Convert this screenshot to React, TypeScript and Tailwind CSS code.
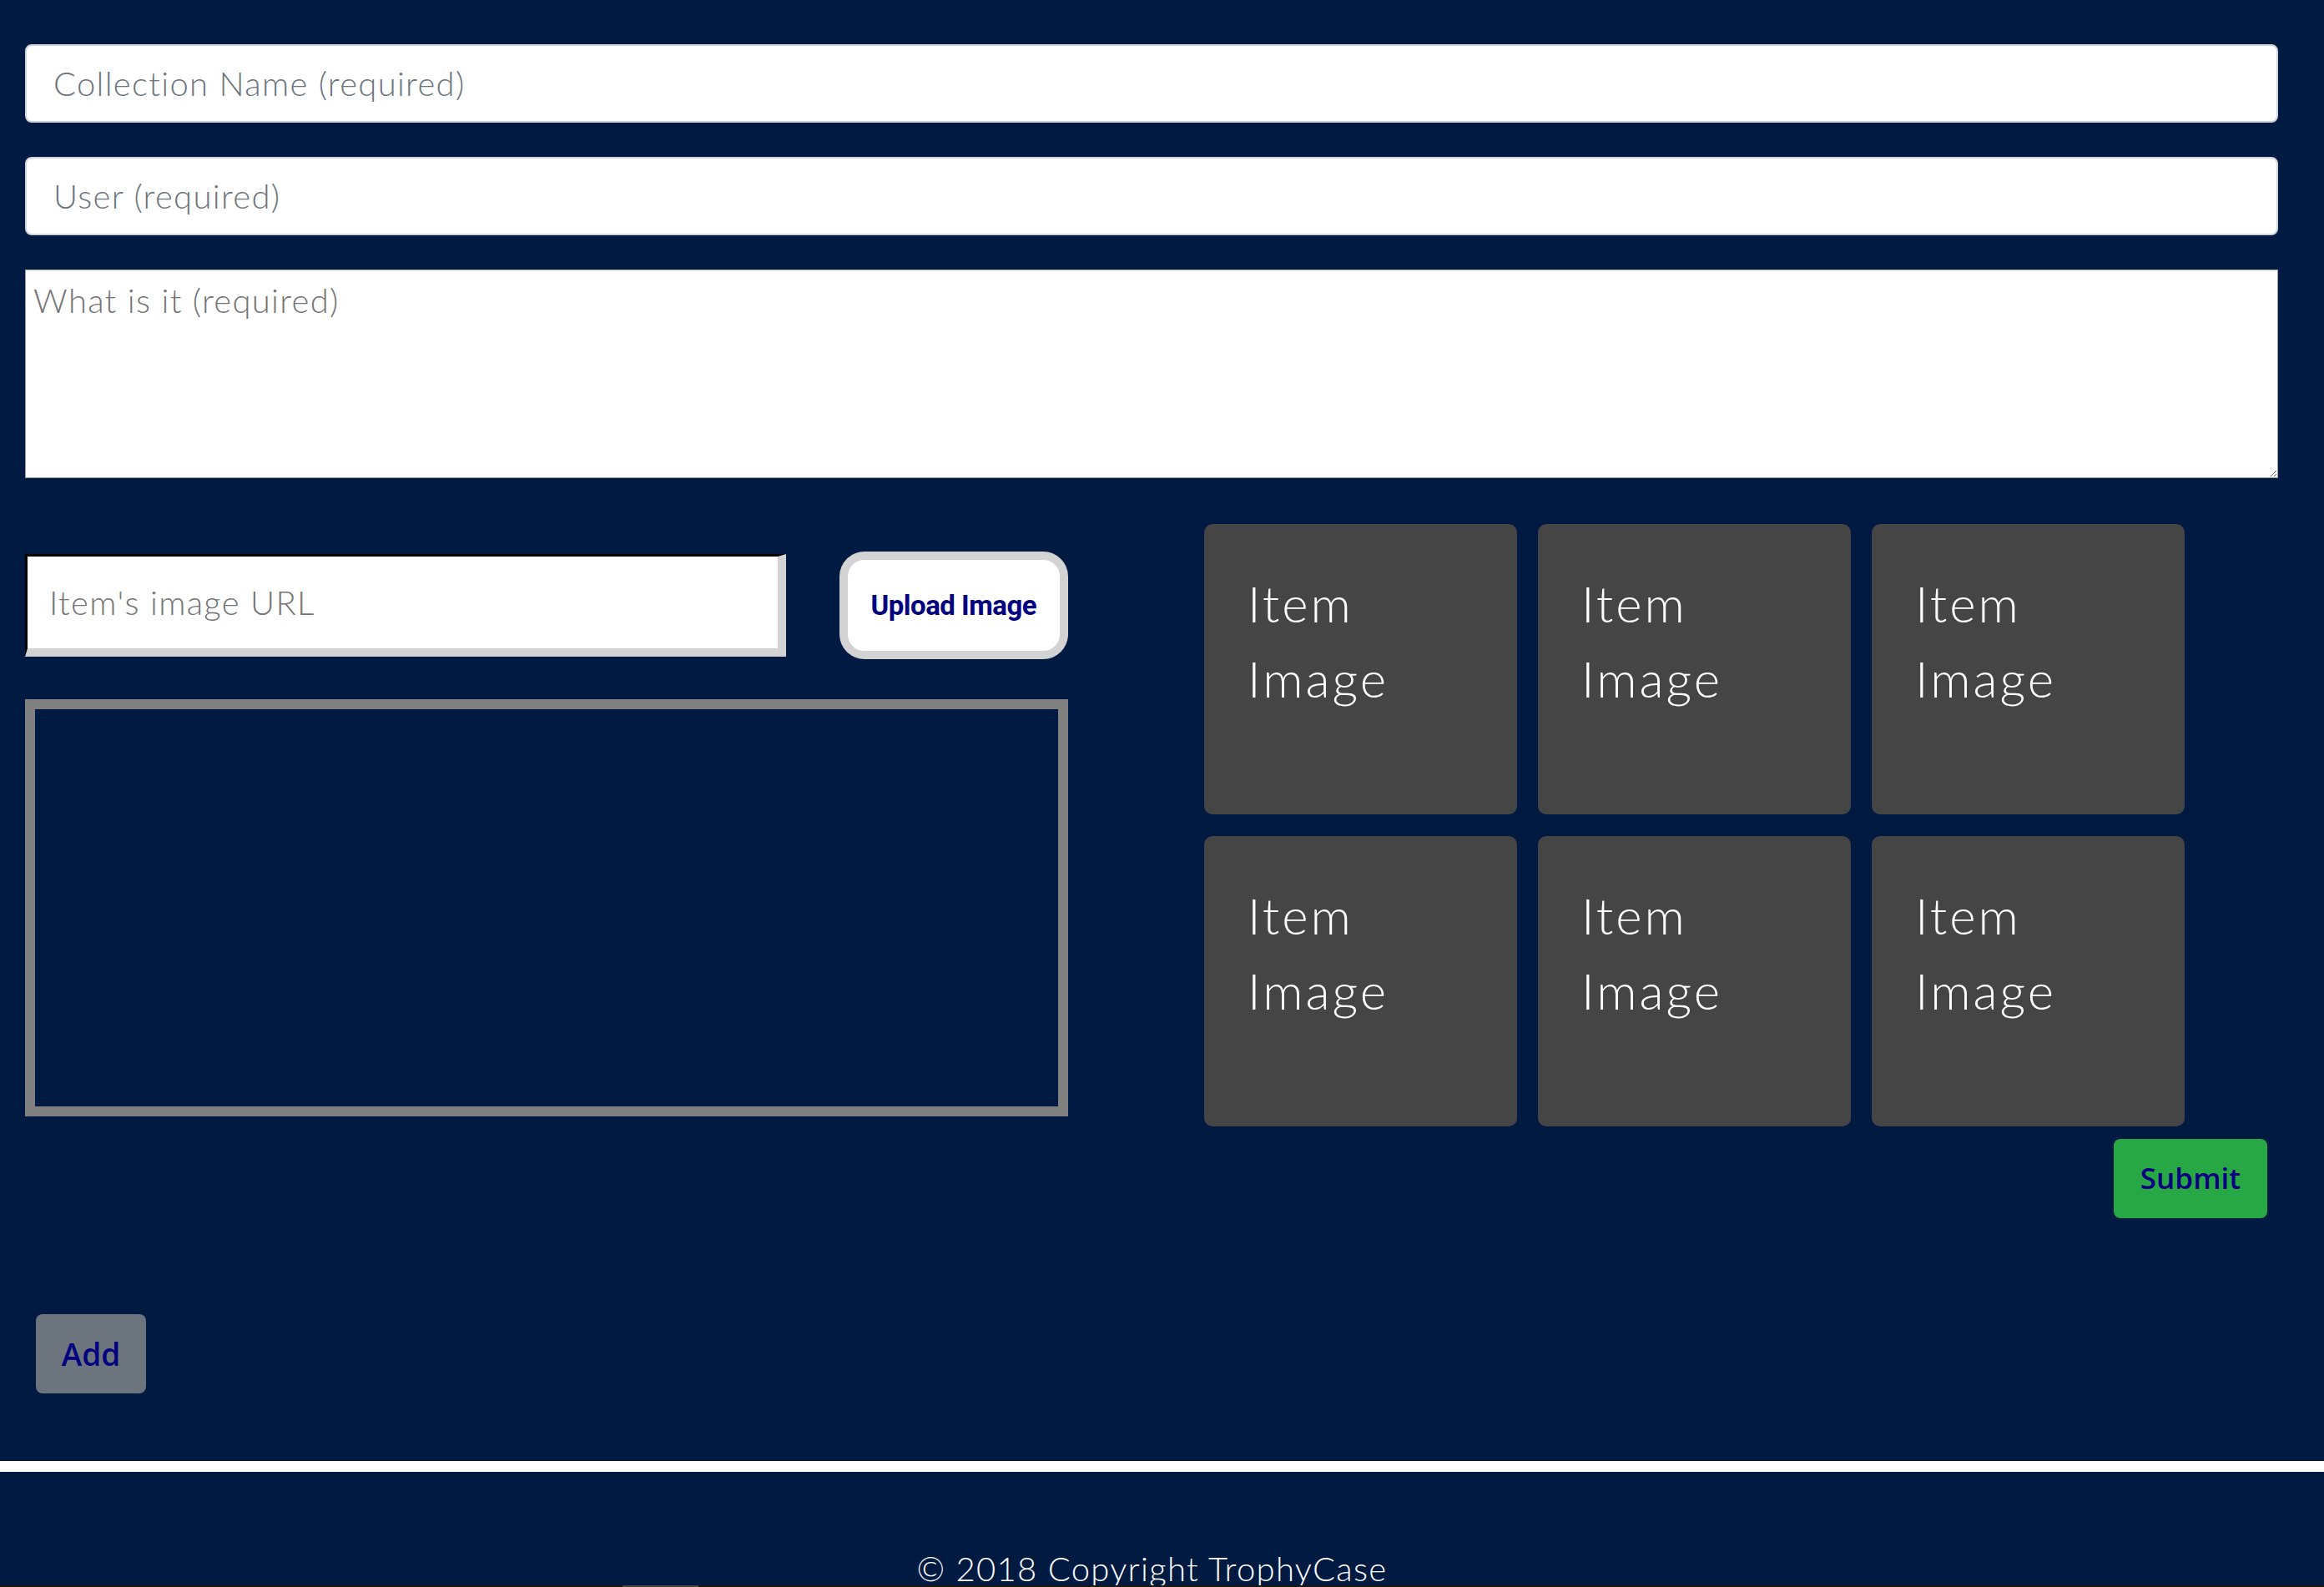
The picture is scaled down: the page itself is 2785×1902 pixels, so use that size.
import React from "react";

const items = [1, 2, 3, 4, 5, 6];

export default function App() {
  return (
    <div className="min-h-[1902px] bg-[#001a42] flex flex-col font-['Lato',sans-serif]">
      {/* form */}
      <div className="pl-[30px] pr-[55px] pt-[53px]">
        <input
          className="block w-full h-[94px] rounded-[8px] border-2 border-[#ced4da] bg-white px-[32px] text-[40px] font-light tracking-[1.3px] text-[#495057] placeholder:text-[#6c757d] outline-none"
          placeholder="Collection Name (required)"
        />
        <input
          className="block w-full h-[94px] mt-[41px] rounded-[8px] border-2 border-[#ced4da] bg-white px-[32px] text-[40px] font-light tracking-[1.3px] text-[#495057] placeholder:text-[#6c757d] outline-none"
          placeholder="User (required)"
        />
        <textarea
          className="block w-full h-[250px] mt-[41px] border border-[#a0a0a0] bg-white px-[9px] pt-[6px] text-[40px] font-light tracking-[1.3px] text-[#495057] placeholder:text-[#757575] outline-none"
          placeholder="What is it (required)"
        />
      </div>

      {/* image section */}
      <div className="flex pl-[30px] mt-[55px]">
        {/* left: url + preview */}
        <div className="w-[1250px] pt-[33px]">
          <div className="flex items-center">
            <input
              className="w-[914px] h-[123px] bg-white border-t-[3px] border-l-[3px] border-r-[10px] border-b-[10px] border-t-black border-l-black border-r-[#d3d3d3] border-b-[#d3d3d3] pl-[26px] text-[40px] font-light tracking-[1.3px] placeholder:text-[#757575] outline-none"
              placeholder="Item's image URL"
            />
            <button className="ml-[64px] w-[275px] h-[129px] bg-white border-[10px] border-[#d3d3d3] rounded-[30px] text-[#000080] font-['Roboto',sans-serif] font-bold text-[33px] tracking-[-0.5px]">
              Upload Image
            </button>
          </div>
          <div className="mt-[48px] h-[500px] border-[12px] border-[#808080]" />
        </div>

        {/* right: item grid + submit */}
        <div className="ml-[163px] w-[1274px]">
          <div className="grid grid-cols-[375px_375px_375px] gap-x-[25px] gap-y-[26px]">
            {items.map((i) => (
              <div
                key={i}
                className="h-[348px] rounded-[10px] bg-[#454545] pl-[52px] pt-[50px] text-white text-[60px] font-light tracking-[3px] leading-[90px]"
              >
                Item
                <br />
                Image
              </div>
            ))}
          </div>
          <div className="flex justify-end mt-[15px]">
            <button className="w-[184px] h-[95px] rounded-[8px] bg-[#28a745] text-[#000080] font-['Open_Sans',sans-serif] font-semibold text-[35px]">
              Submit
            </button>
          </div>
        </div>
      </div>

      {/* add */}
      <div className="pl-[43px] mt-[115px]">
        <button className="w-[132px] h-[95px] rounded-[8px] bg-[#6c757d] text-[#000080] font-['Open_Sans',sans-serif] font-semibold text-[37px]">
          Add
        </button>
      </div>

      <div className="mt-[81px] h-[13px] bg-white" />

      {/* footer */}
      <footer className="h-[136px] pt-[96px] pr-[24px] text-center text-white text-[40px] font-light tracking-[1.3px] leading-none">
        © 2018 Copyright TrophyCase
      </footer>
      <div className="h-[4px] bg-[#1b1512] flex">
        <div className="ml-[746px] w-[91px] bg-[#4a4440]" />
      </div>
    </div>
  );
}
